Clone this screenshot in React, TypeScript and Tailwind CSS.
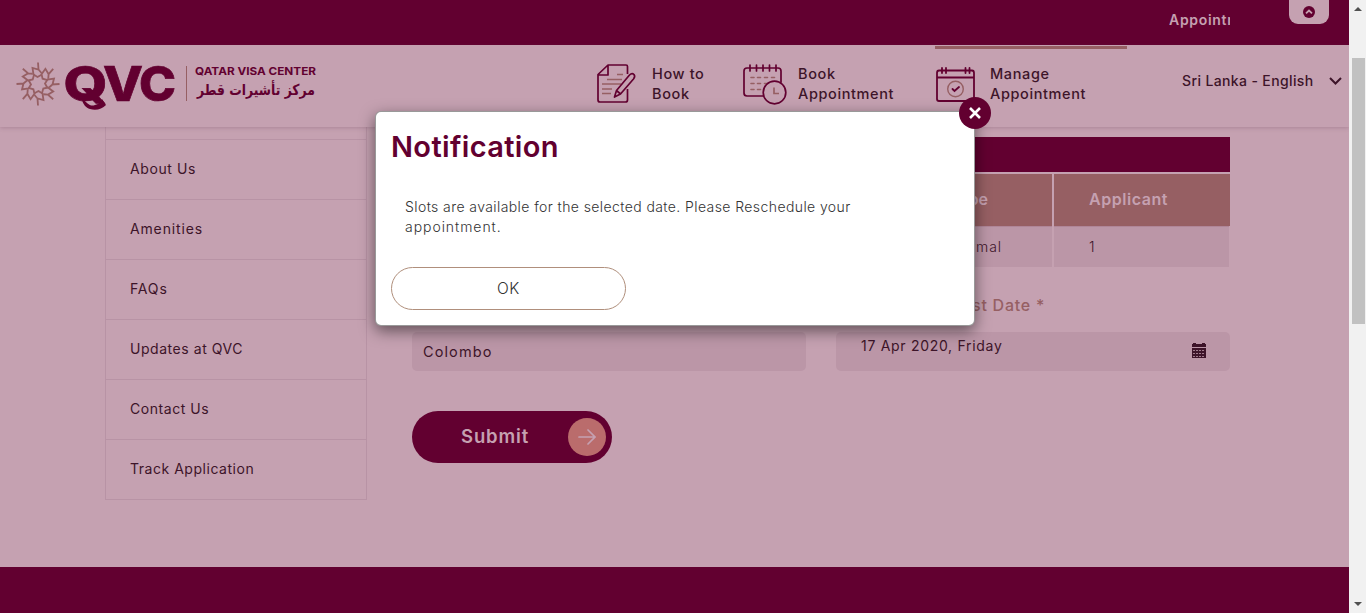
import type { ReactNode } from "react";

const MENU = [
  { label: "About Us", tracking: "tracking-[0.6px]" },
  { label: "Amenities", tracking: "tracking-[0.85px]" },
  { label: "FAQs", tracking: "tracking-[0.85px]" },
  { label: "Updates at QVC", tracking: "tracking-[0.55px]" },
  { label: "Contact Us", tracking: "tracking-[0.55px]" },
  { label: "Track Application", tracking: "tracking-[0.53px]" },
];

function Emblem() {
  return (
    <svg width="44" height="44" viewBox="-22 -22 44 44" fill="none" stroke="#965f63" strokeWidth="1.8">
      {[0, 45, 90, 135, 180, 225, 270, 315].map((a) => (
        <g key={a} transform={`rotate(${a})`}>
          <path d="M0-21.500L0.500-14.500L-5.500-16L-4.500-9.500L-0.500-7L4-9.500M0.500-14.500L3.500-11" />
        </g>
      ))}
    </svg>
  );
}

function Logo() {
  return (
    <div className="flex items-start">
      <Emblem />
      <svg className="ml-1 overflow-visible" width="256" height="52" viewBox="64 62 256 52">
        <g fill="#620030" fontFamily="Inter, sans-serif">
          <g fontSize="48" fontWeight="800" stroke="#620030" strokeWidth="0.7">
            <text x="63.500" y="101" textLength="44" lengthAdjust="spacingAndGlyphs">Q</text>
            <text x="103" y="101" textLength="40" lengthAdjust="spacingAndGlyphs">V</text>
            <text x="139" y="101" textLength="37" lengthAdjust="spacingAndGlyphs">C</text>
          </g>
          <path d="M83 99C87 103 90 107 95 105C99 104 102 101 102 99L106 105C102 109 96 111 90 109C86 108 83 104 82 100Z" />
          <text x="195" y="75" fontSize="11" fontWeight="700" textLength="121" lengthAdjust="spacingAndGlyphs">QATAR VISA CENTER</text>
          <text x="315" y="95" fontFamily="DejaVu Sans, sans-serif" fontSize="15" fontWeight="700" direction="rtl" textLength="118" lengthAdjust="spacingAndGlyphs">مركز تأشيرات قطر</text>
        </g>
        <path d="M186.500 66V101" stroke="#965f63" />
      </svg>
    </div>
  );
}

function GuideIcon() {
  return (
    <svg width="40" height="40" viewBox="597 65 40 40" fill="none" stroke="#620030" strokeWidth="1.700" strokeLinejoin="round">
      <path d="M627.500 75V67.500Q627.500 66 626 66H608L598 75.500V101Q598 103 600 103H625.500Q627.500 103 627.500 101V90M608 66V76H598" />
      <path d="M617 75.500H623M607 80.500H622M602 85H621M602 90H612M602 94.500H611" stroke="#965f63" strokeWidth="1.400" />
      <path d="M614.500 98L616.500 91.500L629.500 76Q632 73.500 634 75.500Q635.500 77.500 633.500 80L620.500 95ZM616.500 91.500L620.500 95" />
    </svg>
  );
}

function BookIcon() {
  return (
    <svg width="44" height="42" viewBox="743 63 44 42" fill="none" stroke="#620030" strokeWidth="1.700" strokeLinecap="round">
      <path d="M763 96H747Q744 96 744 93V71Q744 68 747 68H778Q781 68 781 71V82M750 65V71M756.500 65V71M763 65V71M769.500 65V71M776 65V71" />
      <path d="M751 77.500H754M757.500 77.500H760.500M764.500 77.500H767.500M771.500 77.500H774.500M751 83.500H754M757.500 83.500H760.500M764.500 83.500H767.500M751 89.500H754M757.500 89.500H760.500" stroke="#965f63" strokeWidth="1.600" />
      <circle cx="774.500" cy="92.500" r="11.300" />
      <path d="M774 87.500V93.500H779" stroke="#965f63" strokeLinecap="butt" />
    </svg>
  );
}

function ManageIcon() {
  return (
    <svg width="40" height="36" viewBox="935 67 40 36" fill="none" stroke="#620030" strokeWidth="1.800" strokeLinecap="round">
      <path d="M939 70.500Q937 70.500 937 73V99Q937 101 939 101H972Q974 101 974 99V73Q974 70.500 972 70.500H939M937 77.500H974M942 68V73M946 68V73M965.500 68V73M969.500 68V73" />
      <circle cx="955.500" cy="89" r="7.800" stroke="#965f63" strokeWidth="1.400" />
      <path d="M952.500 89L954.500 91L959 87" />
    </svg>
  );
}

function NavItem({ icon, children }: { icon: ReactNode; children: ReactNode }) {
  return <div className="flex items-start">{icon}<div className="text-[14.5px] font-medium leading-5 tracking-[0.62px]">{children}</div></div>;
}

function Dialog() {
  return (
    <div className="absolute left-[375px] top-[111px] z-20 h-[215px] w-[600px] rounded-md border border-black/40 bg-white shadow-[0_5px_15px_rgba(0,0,0,0.5)]">
      <button className="absolute -right-[17px] -top-[15px] flex size-8 items-center justify-center rounded-full bg-[#620030]">
        <svg width="12" height="12" viewBox="0 0 12 12" stroke="white" strokeWidth="2.600"><path d="M1 1L11 11M11 1L1 11" /></svg>
      </button>
      <div className="flex flex-col items-start pl-[15px] pt-[17px]">
        <h1 className="h-9 whitespace-nowrap text-[29px] font-semibold leading-9 tracking-[0.35px] text-[#620030]">Notification</h1>
        <p className="ml-[14px] mt-8 h-10 whitespace-nowrap text-[14px] font-light leading-5 tracking-[0.41px] text-[#333]">
          Slots are available for the selected date. Please Reschedule your<br /><span className="tracking-[0.95px]">appointment.</span>
        </p>
        <button className="mt-[30px] h-[43px] w-[235px] rounded-full border border-[#b08f7c] pt-px text-[15.5px] font-light tracking-[0.5px] text-[#333]">OK</button>
      </div>
    </div>
  );
}

export default function App() {
  return (
    <div className="flex h-[613px] w-[1366px] overflow-hidden bg-[#f1f1f1] font-['Inter',sans-serif] text-[#3d1429]">
      <main className="relative flex w-[1349px] shrink-0 flex-col overflow-hidden bg-[#c5a1b1]">
        <div className="flex h-[45px] shrink-0 justify-end bg-[#620030] pr-5">
          <div className="mr-[59px] mt-[10px] h-5 w-[61px] overflow-hidden whitespace-nowrap text-[14px] font-semibold leading-5 tracking-[0.7px] text-[#c5a1b1]">Appointment</div>
          <div className="flex h-6 w-10 items-center justify-center rounded-b-[9px] bg-[#c5a1b1]">
            <svg width="12" height="12" viewBox="0 0 12 12"><circle cx="6" cy="6" r="6" fill="#620030" /><path d="M3 7.300L6 4.500L9 7.300" fill="none" stroke="#c5a1b1" strokeWidth="1.800" /></svg>
          </div>
        </div>
        <header className="relative z-10 flex h-[82px] shrink-0 items-start bg-[#c5a1b1] shadow-[0_1px_4px_rgba(98,50,75,0.25)]">
          <div className="ml-4 mt-[17px] w-[581px]"><Logo /></div>
          <div className="mt-[19px] w-[146px]"><NavItem icon={<div className="w-[55px]"><GuideIcon /></div>}>How to<br />Book</NavItem></div>
          <div className="mt-[18px] w-[192px]"><NavItem icon={<div className="w-[55px]"><BookIcon /></div>}><div className="pt-px">Book<br />Appointment</div></NavItem></div>
          <div className="mt-px h-[60px] w-48 border-t-[3px] border-[#965f63] pt-[15px]"><NavItem icon={<div className="w-[55px] pt-[3px]"><ManageIcon /></div>}>Manage<br />Appointment</NavItem></div>
          <div className="ml-[55px] mt-[26px] flex items-center whitespace-nowrap text-[14px] font-medium leading-5 tracking-[0.37px]">
            <span className="w-[147px]">Sri Lanka - English</span>
            <svg width="13" height="8" viewBox="0 0 13 8" fill="none" stroke="#3d1429" strokeWidth="2"><path d="M1 1L6.500 6.500L12 1" /></svg>
          </div>
        </header>
        <div className="flex h-[440px] shrink-0 pl-[105px]">
          <aside className="h-[373px] w-[262px] border-x border-b border-[#b893a5] pt-3">
            {MENU.map((m) => <div key={m.label} className={`flex h-[60px] items-center border-t border-[#b893a5] pb-0.5 pl-6 text-[14px] ${m.tracking}`}>{m.label}</div>)}
          </aside>
          <section className="ml-[45px] w-[818px] pt-[10px]">
            <div className="h-[35px] bg-[#620030]" />
            <div className="mt-0.5 grid grid-cols-[640px_175px] gap-x-0.5 text-[16px]">
              <div className="flex h-[52px] items-center justify-end bg-[#965f63] pb-0.5 pr-[64px] font-semibold text-[#c5a1b1]">Visa Type</div>
              <div className="flex h-[52px] w-44 items-center bg-[#965f63] pb-0.5 pl-[35px] font-semibold tracking-[0.55px] text-[#c5a1b1]">Applicant</div>
              <div className="flex h-[41px] items-center justify-end border-t border-[#b08698] bg-[#bb96a7] pb-0.5 pr-[50px] text-[14px] font-light tracking-[0.9px]">Normal</div>
              <div className="flex h-[41px] items-center border-t border-[#b08698] bg-[#bb96a7] pb-0.5 pl-[35px] text-[14px] font-light">1</div>
            </div>
            <div className="mt-[26px] w-[633px] text-right text-[16px] font-medium leading-6 tracking-[0.75px] text-[#965f63]">Earliest Date *</div>
            <div className="mt-[15px] grid grid-cols-[394px_394px] gap-x-[30px] text-[14px]">
              <div className="flex h-[39px] items-center rounded-[5px] bg-[#bb96a7] pl-[11px] text-[14.5px] tracking-[1.1px]">Colombo</div>
              <div className="flex h-[39px] items-start justify-between rounded-[5px] bg-[#bb96a7] pl-[25px] pr-6 pt-1 leading-5">
                <span className="tracking-[0.7px]">17 Apr 2020, Friday</span>
                <svg className="mt-[7px]" width="14" height="15" viewBox="0 0 14 15"><path d="M0 1H1V0H4V1H10V0H13V1H14V4H0ZM0 5H14V15H0Z" fill="#3d1429" /><path d="M1 7.500H13M1 10.500H13M1 13.500H13" stroke="#bb96a7" strokeWidth="0.8" strokeDasharray="2 1" /></svg>
              </div>
            </div>
            <button className="mt-10 flex h-[52px] w-[200px] items-center justify-between rounded-full bg-[#620030] pl-[49px] pr-1.5 font-semibold text-[#c5a1b1]">
              <span className="text-[18.5px] tracking-[0.85px]">Submit</span>
              <span className="flex size-[38px] items-center justify-center rounded-full bg-[#ba6c6c]"><svg width="18" height="16" viewBox="0 0 18 16" fill="none" stroke="#c5a1b1" strokeWidth="1.700" strokeLinecap="round"><path d="M1 8H17M10 1L17 8L10 15" /></svg></span>
            </button>
          </section>
        </div>
        <footer className="h-[46px] shrink-0 bg-[#620030]" />
        <Dialog />
      </main>
      <div className="flex w-[17px] flex-col items-center justify-between bg-[#f1f1f1] py-[7px]">
        <svg width="8" height="4"><path d="M4 0L8 4H0Z" fill="#505050" /></svg>
        <div className="mb-auto ml-px mt-[47px] h-[266px] w-[13px] bg-[#c1c1c1]" />
        <svg width="8" height="4"><path d="M0 0H8L4 4Z" fill="#505050" /></svg>
      </div>
    </div>
  );
}
